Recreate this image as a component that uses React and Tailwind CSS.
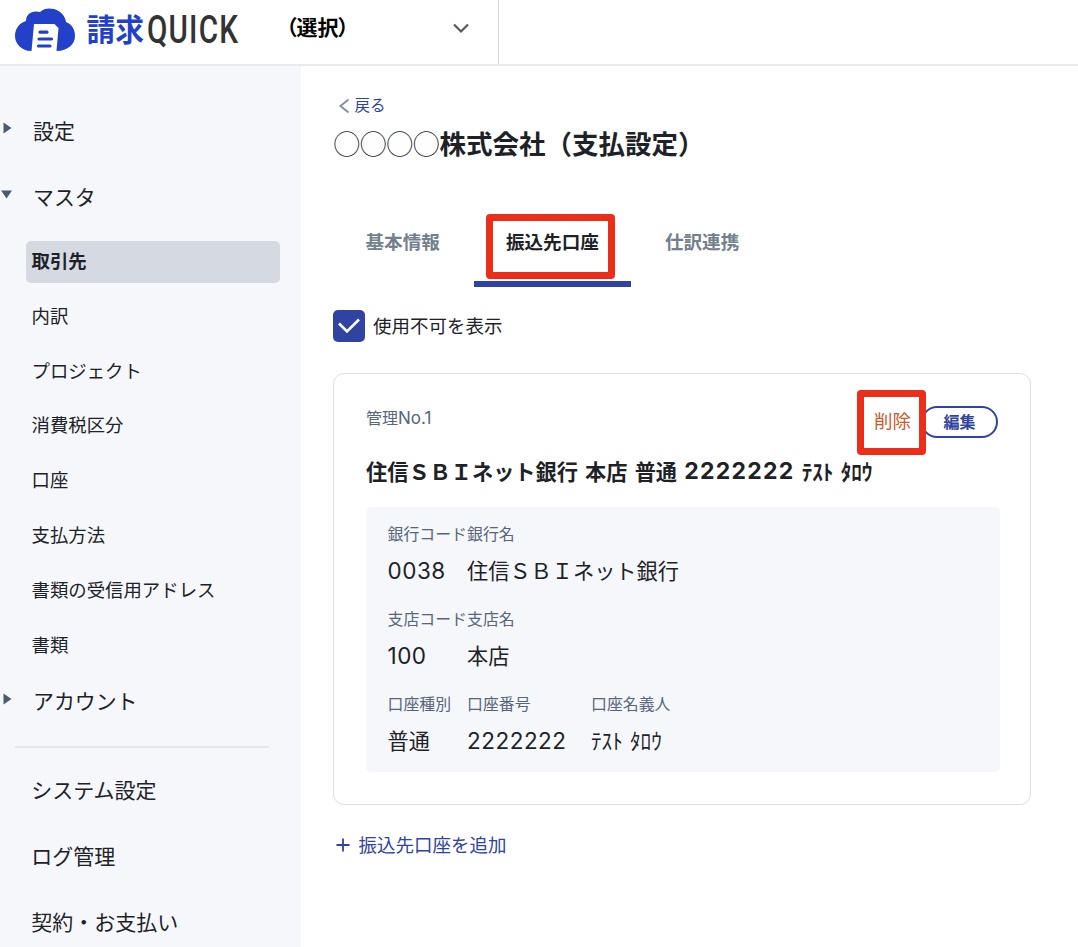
import React from 'react';

const masterItems = [
  '取引先',
  '内訳',
  'プロジェクト',
  '消費税区分',
  '口座',
  '支払方法',
  '書類の受信用アドレス',
  '書類',
];

const footerItems = ['システム設定', 'ログ管理', '契約・お支払い'];

const tabs = ['基本情報', '振込先口座', '仕訳連携'];

const Logo = () => (
  <svg width="236" height="52" viewBox="0 0 236 52" className="ml-[14px] mt-[3px] shrink-0 overflow-visible">
    <path
      d="M17 48 C8 48 1 41 1 33 C1 26 5 20 12 18 C12 11 18 7 26 9 C30 5 35 5 40 6 C47 8 51 13 52 19 C58 21 61 27 61 33 C61 41 54 48 42.500 48 L44.500 25 L40.500 21 L20 21 L17.500 48 Z"
      fill="#2340c8"
    />
    <path
      d="M26 29.200H33M25 36H37.500M24.500 43H36"
      stroke="#2340c8"
      strokeWidth="3.200"
      strokeLinecap="round"
    />
    <text
      x="72.500"
      y="38"
      fontSize="31"
      fontWeight="700"
      fill="#2340c8"
      textLength="57.500"
      lengthAdjust="spacingAndGlyphs"
      fontFamily="Noto Sans CJK JP, sans-serif"
    >
      請求
    </text>
    <text
      x="133"
      y="40"
      fontSize="38"
      fontWeight="500"
      letterSpacing="1.500"
      fill="#333333"
      textLength="92"
      lengthAdjust="spacingAndGlyphs"
      fontFamily="Roboto, sans-serif"
    >
      QUICK
    </text>
  </svg>
);

const Header = () => (
  <header className="flex h-[66px] shrink-0 border-b-2 border-[#e8eaf0] bg-white">
    <div className="flex w-[499px] border-r border-[#d3d8e0]">
      <Logo />
      <div className="ml-[36px] flex h-[55px] flex-1 items-center justify-between pr-[28px]">
        <span className="-mt-px text-[21px] font-bold text-black [font-feature-settings:'palt']">（選択）</span>
        <svg width="18" height="12" viewBox="0 0 18 12" fill="none">
          <path d="M2 2.500L9 9.500L16 2.500" stroke="#55595e" strokeWidth="2.200" />
        </svg>
      </div>
    </div>
  </header>
);

const SectionRow = ({ label, open }) => (
  <div className="flex h-[66px] items-center">
    <svg width="12" height="12" viewBox="0 0 12 12" className="mb-1.5 shrink-0">
      {open ? <path d="M1 2.500H12L6.500 10.500Z" fill="#4c5a6d" /> : <path d="M3.500 0.500V11.500L11.500 6Z" fill="#4c5a6d" />}
    </svg>
    <span className="mb-px ml-[21px] text-[20.900px]">{label}</span>
  </div>
);

const Sidebar = () => (
  <aside className="w-[301px] shrink-0 bg-[#f5f7fb] pt-8">
    <SectionRow label="設定" />
    <SectionRow label="マスタ" open />
    <ul className="ml-[26px] mt-[11px] flex w-[254px] flex-col gap-[12.8px]">
      {masterItems.map((item, i) => (
        <li
          key={item}
          className={`flex h-[42px] items-center rounded-[5px] pb-[2.500px] pl-[5.5px] text-[18.4px] ${
            i === 0 ? 'bg-[#d5d9e2] font-bold' : ''
          }`}
        >
          {item}
        </li>
      ))}
    </ul>
    <div className="mt-[2px]">
      <SectionRow label="アカウント" />
    </div>
    <hr className="ml-[15px] mt-[11px] w-[254px] border-t-2 border-[#e6e7ec]" />
    <ul className="mt-[10px]">
      {footerItems.map((item) => (
        <li key={item} className="flex h-[66px] items-center pb-[2px] pl-[31.200px] text-[21px]">
          {item}
        </li>
      ))}
    </ul>
  </aside>
);

const Field = ({ label, value, className }) => (
  <div className={`whitespace-nowrap ${className}`}>
    <dt className="flex h-6 items-center text-[15.900px] text-[#57657a]">{label}</dt>
    <dd className="mt-2 flex h-[31px] items-center text-[21.200px]">{value}</dd>
  </div>
);

const Digits = ({ children }) => (
  <span className="mt-[3px] font-[Inter] text-[22.500px] tracking-[0.500px]">{children}</span>
);

const AccountCard = () => (
  <section className="-ml-[0.5px] mt-[31px] h-[432px] w-[698px] rounded-[11px] border border-[#dcdfe7] px-8 pt-[32px]">
    <div className="flex h-8 items-center justify-between">
      <span className="mb-[7px] font-[Inter,'Noto_Sans_CJK_JP',sans-serif] text-[16px] text-[#57657a]">
        管理<span className="text-[17px]">No.1</span>
      </span>
      <div className="flex items-center gap-[10px]">
        <div className="relative text-[18.500px] leading-[28px] text-[#c85a2e]">
          <span className="relative -top-[2px]">削除</span>
          <div className="absolute -left-[17px] -top-[18px] z-10 h-[65px] w-[69px] rounded-[4px] border-[7px] border-[#eb2d1a]" />
        </div>
        <button className="h-8 w-[77px] rounded-full border-[2.500px] border-[#3043a0] pb-[3px] text-[16px] font-bold leading-none text-[#3043a0]">
          編集
        </button>
      </div>
    </div>
    <h2 className="mt-[17px] flex h-8 items-center whitespace-pre text-[21.200px] font-bold [word-spacing:2.400px]">
      住信ＳＢＩネット銀行 本店 普通{' '}
      <span className="font-[Inter] text-[23px] tracking-[1.250px]">2222222</span>
      <span> ﾃｽﾄ ﾀﾛｳ</span>
    </h2>
    <dl className="mt-[20px] flex h-[265px] w-[634px] flex-col gap-[22px] rounded-[5px] bg-[#f5f7fb] pl-[21.500px] pt-[15px]">
      <div className="flex">
        <Field label="銀行コード" value={<Digits>0038</Digits>} className="w-[79.500px]" />
        <Field label="銀行名" value="住信ＳＢＩネット銀行" />
      </div>
      <div className="flex">
        <Field
          label="支店コード"
          value={<span className="flex tracking-[1.500px]"><Digits>100</Digits></span>}
          className="w-[79.500px]"
        />
        <Field label="支店名" value="本店" />
      </div>
      <div className="flex">
        <Field label="口座種別" value="普通" className="w-[79.500px]" />
        <Field label="口座番号" value={<Digits>2222222</Digits>} className="w-[124px]" />
        <Field label="口座名義人" value={<span className="[word-spacing:2.500px]">ﾃｽﾄ ﾀﾛｳ</span>} />
      </div>
    </dl>
  </section>
);

const App = () => {
  return (
    <div className="flex h-[947px] w-[1078px] flex-col overflow-hidden bg-white font-['Noto_Sans_CJK_JP',sans-serif] text-[#1e2227]">
      <Header />
      <div className="flex flex-1">
        <Sidebar />
        <main className="flex-1 pl-[32.500px] pt-[27px]">
          <a className="flex h-6 items-center text-[15.500px] text-[#3043a0]">
            <svg width="12" height="16" viewBox="0 0 12 16" fill="none" className="ml-[4px] mr-[5px] mt-px">
              <path d="M10.500 1.500L2.500 8L10.500 14.500" stroke="#87909b" strokeWidth="2" />
            </svg>
            戻る
          </a>
          <h1 className="mt-[6px] flex h-10 items-center text-[26.500px] font-bold">
            <span>
              <span className="font-normal">◯◯◯◯</span>株式会社（支払設定）
            </span>
          </h1>

          <nav className="mt-[38px] flex gap-[2px]">
            {tabs.map((tab) => {
              const active = tab === '振込先口座';
              return (
                <div
                  key={tab}
                  className={`relative h-[86px] border-b-[6px] px-8 pt-[26px] text-[18.600px] font-bold leading-[28px] ${
                    active ? 'border-[#3043a0]' : 'border-transparent text-[#73808c]'
                  }`}
                >
                  {tab}
                  {active && (
                    <div className="absolute left-[12px] top-[13px] h-[65px] w-[129px] rounded-[4px] border-[7px] border-[#eb2d1a]" />
                  )}
                </div>
              );
            })}
          </nav>

          <label className="-ml-[0.5px] mt-[23px] flex h-8 items-center text-[18.500px]">
            <span className="mr-2 flex size-8 items-center justify-center rounded-[5px] bg-[#3043a0]">
              <svg width="24" height="18" viewBox="0 0 24 18" fill="none">
                <path d="M2 6.500L10 14.500L22 2.500" stroke="white" strokeWidth="2.600" />
              </svg>
            </span>
            使用不可を表示
          </label>

          <AccountCard />

          <a className="mt-[24px] flex h-8 items-center text-[18.500px] text-[#3043a0]">
            <svg width="16" height="16" viewBox="0 0 16 16" fill="none" className="ml-[1.5px] mr-[7.500px]">
              <path d="M8 1.500V14.500M1.500 8H14.500" stroke="#3043a0" strokeWidth="1.800" />
            </svg>
            振込先口座を追加
          </a>
        </main>
      </div>
    </div>
  );
};

export default App;
